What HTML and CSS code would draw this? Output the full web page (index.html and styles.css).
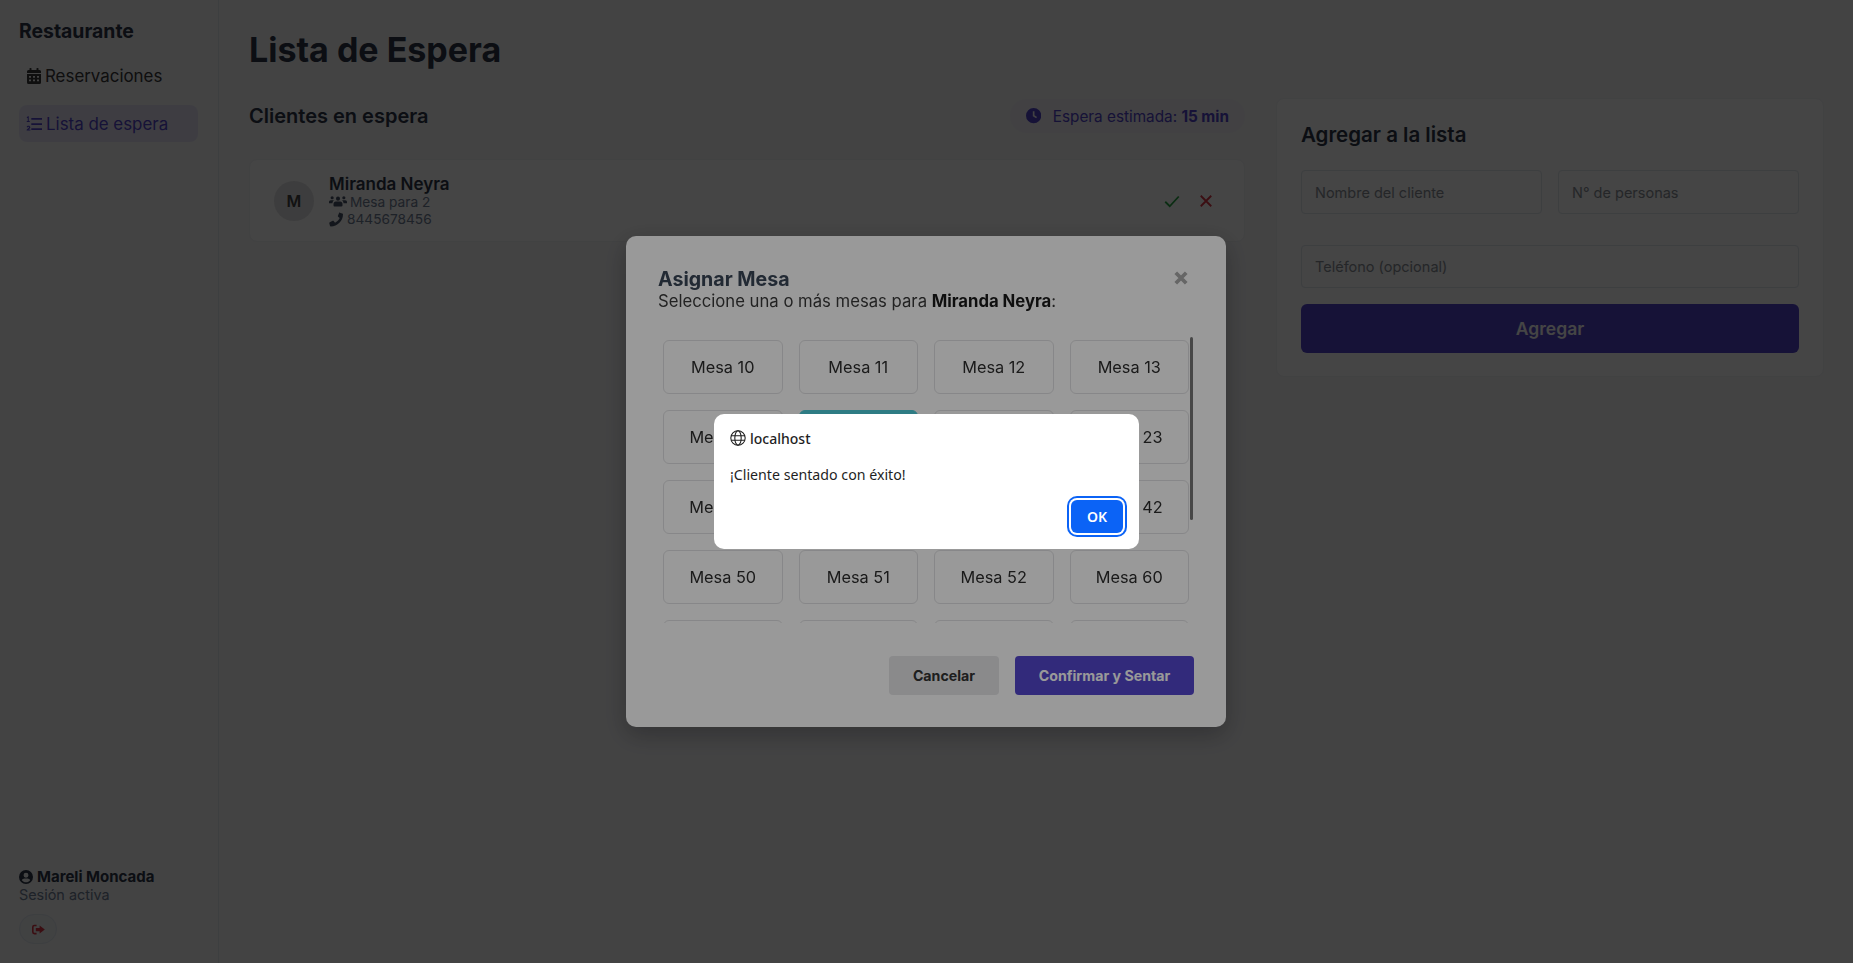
FILE: index.html
```html
<!DOCTYPE html>
<html lang="es">
<head>
    <meta charset="UTF-8">
    <title>Lista de Espera</title>
    <link rel="stylesheet" href="styles.css">
</head>
<body>

<aside class="sidebar">
    <h2 class="brand">Restaurante</h2>
    <nav class="nav">
        <a class="nav-item">
            <svg class="icon" viewBox="0 0 448 512"><path d="M96 0h32a16 16 0 0 1 16 16v48h160V16a16 16 0 0 1 16-16h32a16 16 0 0 1 16 16v48h32a48 48 0 0 1 48 48v48H0v-48a48 48 0 0 1 48-48h32V16A16 16 0 0 1 96 0zM0 192h448v272a48 48 0 0 1-48 48H48a48 48 0 0 1-48-48zm64 64v56h64v-56zm128 0v56h64v-56zm128 0v56h64v-56zM64 368v56h64v-56zm128 0v56h64v-56zm128 0v56h64v-56z" fill-rule="evenodd"/></svg>
            Reservaciones
        </a>
        <a class="nav-item active">
            <svg class="icon icon-list" viewBox="0 0 512 512"><path d="M24 40l40-32h24v152h32v32H24v-32h32V56L32 72zM170 64h342v56H170zM170 228h342v56H170zM170 392h342v56H170zM20 352c8-30 34-44 60-44 32 0 58 18 58 50 0 26-18 42-40 60l-18 14h60v32H20v-28l52-44c14-12 26-22 26-34 0-10-8-16-20-16s-22 8-26 22z"/></svg>
            Lista de espera
        </a>
    </nav>
    <div class="user">
        <div class="user-name">
            <svg class="icon" viewBox="0 0 512 512"><path fill-rule="evenodd" d="M256 0a256 256 0 1 0 0 512 256 256 0 0 0 0-512zm0 100a90 90 0 1 1 0 180 90 90 0 0 1 0-180zm0 350c-62 0-118-28-154-74 16-38 54-64 98-64h112c44 0 82 26 98 64-36 46-92 74-154 74z"/></svg>
            Mareli Moncada
        </div>
        <div class="user-status">Sesión activa</div>
        <button class="logout">
            <svg class="icon" viewBox="0 0 512 512"><path d="M180 64H96a96 96 0 0 0-96 96v192a96 96 0 0 0 96 96h84v-64H96a32 32 0 0 1-32-32V160a32 32 0 0 1 32-32h84zM300 96l204 160-204 160v-96H150V192h150z"/></svg>
        </button>
    </div>
</aside>

<main class="main">
    <h1 class="page-title">Lista de Espera</h1>
    <div class="columns">
        <section class="waiting">
            <div class="waiting-head">
                <h2>Clientes en espera</h2>
                <div class="estimate">
                    <svg class="icon" viewBox="0 0 512 512"><path fill-rule="evenodd" d="M256 0a256 256 0 1 0 0 512 256 256 0 0 0 0-512zm-28 112h56v130l86 58-32 46-110-74z"/></svg>
                    <span>Espera estimada: <strong>15 min</strong></span>
                </div>
            </div>
            <div class="client">
                <div class="avatar">M</div>
                <div class="client-info">
                    <div class="client-name">Miranda Neyra</div>
                    <div class="client-line">
                        <svg class="icon icon-users" viewBox="0 0 640 512"><path d="M320 64a72 72 0 1 1 0 144 72 72 0 0 1 0-144zM112 48a56 56 0 1 1 0 112 56 56 0 0 1 0-112zm416 0a56 56 0 1 1 0 112 56 56 0 0 1 0-112zM60 192h90c10 0 20 2 28 6-32 24-52 60-54 102H0v-48c0-34 26-60 60-60zm430 0h90c34 0 60 26 60 60v48H516c-2-42-22-78-54-102 8-4 18-6 28-6zM240 240h160c44 0 80 36 80 80v64c0 18-14 32-32 32H192c-18 0-32-14-32-32v-64c0-44 36-80 80-80z"/></svg>
                        Mesa para 2
                    </div>
                    <div class="client-line">
                        <svg class="icon" viewBox="0 0 512 512"><path d="M390 10l96 24c14 4 26 16 26 32 0 246-200 446-446 446-16 0-28-12-32-26L10 390c-4-16 4-32 18-38l108-46c12-6 28-2 36 8l48 58c76-36 136-98 172-172l-58-48c-10-8-14-24-8-36l46-108c6-14 22-22 38-18z"/></svg>
                        8445678456
                    </div>
                </div>
                <div class="client-actions">
                    <svg class="action action-ok" viewBox="0 0 24 24"><path d="M3 13l6 6L21 6"/></svg>
                    <svg class="action action-no" viewBox="0 0 24 24"><path d="M5 5l14 14M19 5L5 19"/></svg>
                </div>
            </div>
        </section>

        <section class="add-card">
            <h2>Agregar a la lista</h2>
            <div class="field-row">
                <input class="field" placeholder="Nombre del cliente">
                <input class="field" placeholder="N° de personas">
            </div>
            <input class="field field-wide" placeholder="Teléfono (opcional)">
            <button class="add-button">Agregar</button>
        </section>
    </div>
</main>

<!-- modal -->
<div class="backdrop">
    <div class="modal">
        <svg class="modal-close" viewBox="0 0 24 24"><path d="M5 5l14 14M19 5L5 19"/></svg>
        <h3 class="modal-title">Asignar Mesa</h3>
        <p class="modal-sub">Seleccione una o más mesas para <strong>Miranda Neyra</strong>:</p>
        <div class="tables">
            <button class="table">Mesa 10</button>
            <button class="table">Mesa 11</button>
            <button class="table">Mesa 12</button>
            <button class="table">Mesa 13</button>
            <button class="table">Mesa 20</button>
            <button class="table selected">Mesa 21</button>
            <button class="table">Mesa 22</button>
            <button class="table">Mesa 23</button>
            <button class="table">Mesa 30</button>
            <button class="table">Mesa 40</button>
            <button class="table">Mesa 41</button>
            <button class="table">Mesa 42</button>
            <button class="table">Mesa 50</button>
            <button class="table">Mesa 51</button>
            <button class="table">Mesa 52</button>
            <button class="table">Mesa 60</button>
            <button class="table">Mesa 61</button>
            <button class="table">Mesa 62</button>
            <button class="table">Mesa 70</button>
            <button class="table">Mesa 71</button>
            <button class="table">Mesa 72</button>
            <button class="table">Mesa 80</button>
        </div>
        <div class="scroll-thumb"></div>
        <div class="modal-footer">
            <button class="btn btn-cancel">Cancelar</button>
            <button class="btn btn-confirm">Confirmar y Sentar</button>
        </div>
    </div>
</div>

<!-- browser alert -->
<div class="alert-layer">
    <div class="alert">
        <div class="alert-host">
            <svg class="globe" viewBox="0 0 24 24"><circle cx="12" cy="12" r="10.8"/><ellipse cx="12" cy="12" rx="4.8" ry="10.8"/><path d="M1.8 8.5h20.4M1.8 15.5h20.4"/></svg>
            localhost
        </div>
        <div class="alert-text">¡Cliente sentado con éxito!</div>
        <div class="alert-footer">
            <button class="alert-ok">OK</button>
        </div>
    </div>
</div>

</body>
</html>
```

FILE: styles.css
```css
* {
    box-sizing: border-box;
}
body {
    font-family: Inter, "Liberation Sans", sans-serif;
    margin: 0;
    height: 963px;
    overflow: hidden;
    display: flex;
    background-color: #f8f8fb;
    color: #2d3748;
}
h1, h2, h3, p {
    margin: 0;
}
.icon {
    width: 1em;
    height: 1em;
    fill: currentColor;
    flex: none;
}

/* sidebar */
.sidebar {
    width: 219px;
    flex: none;
    padding: 20px 19px 19px;
    border-right: 1px solid #e2e8f0;
    display: flex;
    flex-direction: column;
}
.brand {
    font-size: 19.4px;
    font-weight: 700;
    line-height: 22px;
    margin-bottom: 15px;
}
.nav {
    display: flex;
    flex-direction: column;
    gap: 11px;
    width: 179px;
}
.nav-item {
    display: flex;
    align-items: center;
    gap: 3px;
    height: 37px;
    padding: 0 7px;
    border-radius: 8px;
    font-size: 16.9px;
    color: #3a3a3a;
}
.nav-item .icon {
    width: 16px;
    height: 16px;
}
.nav-item.active {
    background-color: rgba(84, 70, 205, 0.1);
    color: #5446cd;
}
.nav-item .icon-list {
    margin-right: 1px;
}
.user {
    margin-top: auto;
    font-size: 14.4px;
}
.user-name {
    display: flex;
    align-items: center;
    gap: 4px;
    font-size: 15px;
    font-weight: 700;
    line-height: 18px;
}
.user-name .icon {
    font-size: 14px;
}
.user-status {
    color: #718096;
    line-height: 18px;
}
.logout {
    display: flex;
    align-items: center;
    justify-content: center;
    width: 38px;
    height: 30px;
    margin-top: 10px;
    background-color: #f1f3f5;
    border: 1px solid #e2e8f0;
    border-radius: 15px;
    color: #dc3545;
    font-size: 13px;
}

/* main */
.main {
    flex: 1;
    padding: 30px 30px 0;
}
.page-title {
    font-size: 34px;
    font-weight: 700;
    line-height: 40px;
    margin-bottom: 29px;
    color: #2d3748;
}
.columns {
    display: flex;
    gap: 31px;
    align-items: flex-start;
}
.waiting {
    width: 996px;
}
.waiting-head {
    display: flex;
    align-items: center;
    justify-content: space-between;
    height: 34px;
    margin-bottom: 26px;
}
.waiting-head h2 {
    font-size: 20px;
    font-weight: 600;
}
.estimate {
    display: flex;
    align-items: center;
    gap: 12px;
    height: 34px;
    padding: 0 16px;
    border-radius: 17px;
    background-color: rgba(84, 70, 205, 0.03);
    color: #5446cd;
    font-size: 15.3px;
}
.client {
    display: flex;
    align-items: center;
    height: 83px;
    padding: 0 24px;
    background-color: #fff;
    border: 1px solid #f1f3f5;
    border-radius: 8px;
}
.avatar {
    width: 40px;
    height: 40px;
    border-radius: 50%;
    background-color: #e4e4e6;
    display: flex;
    align-items: center;
    justify-content: center;
    font-weight: 600;
    font-size: 16px;
    color: #444;
    margin-right: 15px;
}
.client-name {
    font-size: 17px;
    font-weight: 600;
    line-height: 20px;
}
.client-line {
    display: flex;
    align-items: center;
    gap: 4px;
    font-size: 13.7px;
    line-height: 17px;
    color: #718096;
}
.client-line .icon {
    color: #4a5568;
    width: 14px;
    height: 15px;
}
.client-line .icon-users {
    width: 18px;
    height: 16px;
    margin-right: -1px;
}
.client-actions {
    margin-left: auto;
    display: flex;
    gap: 16px;
    margin-right: 5px;
}
.action {
    width: 18px;
    height: 18px;
    fill: none;
    stroke-width: 2.4;
}
.action-ok {
    stroke: #28a745;
}
.action-no {
    stroke: #dc3545;
}

/* add form */
.add-card {
    width: 548px;
    height: 279px;
    margin-top: -1px;
    padding: 24px;
    background-color: #fff;
    border: 1px solid #f1f3f5;
    border-radius: 8px;
}
.add-card h2 {
    font-size: 20.5px;
    font-weight: 600;
    line-height: 24px;
    margin-bottom: 23px;
}
.field-row {
    display: flex;
    gap: 16px;
    margin-bottom: 31px;
}
.field {
    flex: 1;
    min-width: 0;
    height: 44px;
    padding: 0 13px;
    border: 1px solid #e2e8f0;
    border-radius: 4px;
    font: 14.5px Inter, sans-serif;
    background-color: #fff;
}
.field::placeholder {
    color: #8a8f98;
}
.field-wide {
    display: block;
    width: 100%;
    height: 43px;
}
.add-button {
    display: block;
    width: 100%;
    height: 49px;
    margin-top: 16px;
    background-color: #5446cd;
    border: none;
    border-radius: 6px;
    color: #fff;
    font: 600 17.5px Inter, sans-serif;
}

/* modal */
.backdrop {
    position: fixed;
    inset: 0;
    background-color: rgba(0, 0, 0, 0.55);
    display: flex;
    align-items: center;
    justify-content: center;
}
.modal {
    position: relative;
    width: 600px;
    height: 491px;
    margin-right: 1px;
    padding: 32px;
    background-color: #fff;
    border-radius: 10px;
    box-shadow: 0 8px 24px rgba(0, 0, 0, 0.25);
}
.modal-close {
    position: absolute;
    top: 33px;
    right: 36px;
    width: 18px;
    height: 18px;
    fill: none;
    stroke: #aaa;
    stroke-width: 5;
}
.modal-title {
    font-size: 19.6px;
    font-weight: 700;
    line-height: 22px;
    color: #3a4657;
}
.modal-sub {
    font-size: 16.7px;
    line-height: 22px;
    color: #3a3a3a;
}
.modal-sub strong {
    color: #1a1a1a;
}
.tables {
    display: grid;
    grid-template-columns: repeat(4, 1fr);
    gap: 16px;
    align-content: start;
    height: 287px;
    margin-top: 24px;
    padding: 4px 5px;
    overflow: hidden;
}
.scroll-thumb {
    position: absolute;
    top: 101px;
    right: 33px;
    width: 3px;
    height: 183px;
    background-color: #777;
    border-radius: 2px;
}
.table {
    height: 54px;
    background-color: #fff;
    border: 1px solid #e2e2e4;
    border-radius: 6px;
    font: 16.3px Inter, sans-serif;
    color: #2d2d2d;
}
.table.selected {
    background-color: #4ecfdc;
    border-color: #4ecfdc;
    color: #fff;
}
.modal-footer {
    display: flex;
    justify-content: flex-end;
    gap: 16px;
    margin-top: 33px;
}
.btn {
    height: 39px;
    border: none;
    border-radius: 4px;
    font: 700 14.2px Inter, sans-serif;
}
.btn-cancel {
    width: 110px;
    background-color: #e6e6e8;
    color: #333;
}
.btn-confirm {
    width: 179px;
    background-color: #5446cd;
    color: #fff;
}

/* browser alert */
.alert-layer {
    position: fixed;
    inset: 0;
    background-color: rgba(0, 0, 0, 0.4);
    display: flex;
    justify-content: center;
    align-items: flex-start;
    padding-top: 414px;
}
.alert {
    width: 425px;
    height: 135px;
    padding: 14px 16px;
    background-color: #fff;
    border-radius: 10px;
    font-family: "Noto Sans", sans-serif;
    color: #1f1f1f;
}
.alert-host {
    display: flex;
    align-items: center;
    gap: 4px;
    height: 20px;
    font-size: 14px;
    font-weight: 500;
}
.globe {
    width: 16px;
    height: 16px;
    fill: none;
    stroke: #1f1f1f;
    stroke-width: 1.6;
}
.alert-text {
    margin-top: 18px;
    font-size: 14.2px;
    line-height: 18px;
}
.alert-footer {
    display: flex;
    justify-content: flex-end;
    margin-top: 16px;
}
.alert-ok {
    width: 52px;
    height: 33px;
    background-color: #0b63f6;
    border: none;
    box-shadow: 0 0 0 2px #fff, 0 0 0 4px #0b63f6;
    border-radius: 6px;
    color: #fff;
    font: 600 14px "Noto Sans", sans-serif;
}
```
